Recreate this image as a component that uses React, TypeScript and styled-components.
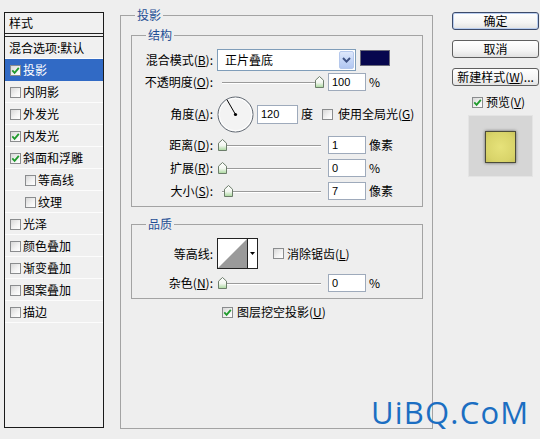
import React from 'react';
import styled, { createGlobalStyle } from 'styled-components';

const GlobalStyle = createGlobalStyle`
  html, body { margin: 0; padding: 0; background: #eeeeee; }
  body {
    font-family: "Noto Sans CJK SC", "Liberation Sans", sans-serif;
    font-size: 12px;
    color: #000;
  }
  #root { width: 540px; height: 439px; overflow: hidden; }
  u { text-decoration: underline; text-underline-offset: 1px; }
`;

const Page = styled.div`
  position: relative;
  width: 540px;
  height: 439px;
  display: flex;
  align-items: flex-start;
  background: #eeeeee;
`;

/* ---------- left style list ---------- */
const StylePanel = styled.div`
  margin: 12px 0 0 4px;
  width: 100px;
  height: 416px;
  box-sizing: border-box;
  border: 1px solid #1a1a1a;
  background: #f0f0f0;
  display: flex;
  flex-direction: column;
`;

const PanelHeader = styled.div`
  height: 24px;
  box-sizing: border-box;
  border-bottom: 4px double #222;
  padding-left: 4px;
  display: flex;
  align-items: center;
  line-height: 14px;
`;

const StyleRow = styled.div<{ $selected?: boolean; $indent?: number }>`
  height: 22px;
  box-sizing: border-box;
  display: flex;
  align-items: center;
  gap: 2px;
  padding-left: ${(p) => p.$indent ?? 5}px;
  line-height: 14px;
  white-space: nowrap;
  background: ${(p) => (p.$selected ? '#316ac5' : 'transparent')};
  color: ${(p) => (p.$selected ? '#fff' : '#000')};
  box-shadow: ${(p) => (p.$selected ? 'none' : 'inset 0 -1px 0 #fcfcfc')};
`;

/* ---------- checkbox ---------- */
const Box = styled.span`
  display: inline-flex;
  width: 11px;
  height: 11px;
  box-sizing: border-box;
  border: 1px solid #8a8c8e;
  background: linear-gradient(135deg, #d8d8d8 0%, #f4f4f4 60%, #ffffff 100%);
  flex: none;
  align-items: center;
  justify-content: center;
`;

const Check: React.FC<{ checked?: boolean }> = ({ checked }) => (
  <Box>
    {checked && (
      <svg width="9" height="9" viewBox="0 0 9 9">
        <path d="M1.3 4.4 L3.6 6.8 L7.8 1.8" fill="none" stroke="#1f9a2c" strokeWidth="1.8" />
      </svg>
    )}
  </Box>
);

/* ---------- middle groups ---------- */
const Group = styled.fieldset`
  margin: 8px 0 0 16px;
  width: 313px;
  height: 421px;
  box-sizing: border-box;
  padding: 0;
  border: 1px solid #a3a3a3;
  min-inline-size: auto;
`;

const Section = styled.fieldset<{ $mt: number }>`
  margin: ${(p) => p.$mt}px 9px 0 10px;
  padding: 7px 0 6px 0;
  border: 1px solid #a3a3a3;
  min-inline-size: auto;
`;

const Legend = styled.legend`
  margin-left: 14px;
  padding: 0 2px;
  line-height: 14px;
  font-size: 12px;
  color: #1f4f95;
`;

const FormRow = styled.div<{ $h: number; $mt?: number; $pl?: number }>`
  display: flex;
  align-items: center;
  height: ${(p) => p.$h}px;
  margin-top: ${(p) => p.$mt ?? 0}px;
  padding-left: ${(p) => p.$pl ?? 0}px;
  line-height: 14px;
  white-space: nowrap;
`;

const FieldLabel = styled.span`
  width: 81px;
  flex: none;
  text-align: right;
  margin-right: 4px;
  white-space: nowrap;
`;

const Select = styled.div`
  width: 139px;
  height: 22px;
  box-sizing: border-box;
  border: 1px solid #7f9db9;
  background: #fff;
  display: flex;
  align-items: center;
  padding-left: 7px;
`;

const SelectButton = styled.span`
  margin-left: auto;
  margin-right: 1px;
  width: 15px;
  height: 18px;
  box-sizing: border-box;
  border: 1px solid #b5c8ec;
  border-radius: 2px;
  background: linear-gradient(180deg, #dfe8fb 0%, #c1d3f6 60%, #b2c7f1 100%);
  display: flex;
  align-items: center;
  justify-content: center;
`;

const Swatch = styled.span`
  margin-left: 4px;
  width: 30px;
  height: 16px;
  box-sizing: border-box;
  align-self: flex-start;
  margin-top: 1px;
  background: #06064e;
  border: 1px solid #6a6a7a;
`;

const SliderWrap = styled.div`
  position: relative;
  width: 107px;
  height: 18px;
  flex: none;
`;

const Track = styled.div`
  position: absolute;
  left: 5px;
  right: 3px;
  top: 9px;
  height: 1px;
  background: #9a9a9a;
  border-bottom: 1px solid #ffffff;
`;

const Thumb = styled.svg`
  position: absolute;
  top: 3px;
`;

const Slider: React.FC<{ frac: number }> = ({ frac }) => (
  <SliderWrap>
    <Track />
    <Thumb width="9" height="12" viewBox="0 0 9 12" style={{ left: 5 + frac * 97 - 4.5 }}>
      <defs>
        <linearGradient id="tg" x1="0" y1="0" x2="0" y2="1">
          <stop offset="0" stopColor="#ffffff" />
          <stop offset="0.55" stopColor="#f2f6ef" />
          <stop offset="1" stopColor="#a8d89c" />
        </linearGradient>
      </defs>
      <path d="M0.5 4.2 L4.5 0.5 L8.5 4.2 V11.5 H0.5 Z" fill="url(#tg)" stroke="#6c7d6a" strokeWidth="1" />
    </Thumb>
  </SliderWrap>
);

const NumInput = styled.div<{ $w?: number; $ml?: number; $h?: number }>`
  margin-left: ${(p) => p.$ml ?? 4}px;
  width: ${(p) => p.$w ?? 38}px;
  height: ${(p) => p.$h ?? 18}px;
  box-sizing: border-box;
  border: 1px solid #9eaabb;
  background: #fff;
  padding-left: 3px;
  font-family: "Liberation Sans", Arial, sans-serif;
  font-size: 11px;
  display: flex;
  align-items: center;
  flex: none;
`;

const Unit = styled.span<{ $ml?: number }>`
  margin-left: ${(p) => p.$ml ?? 3}px;
`;

const CheckText = styled.span<{ $ml?: number }>`
  margin-left: ${(p) => p.$ml ?? 4}px;
  white-space: nowrap;
`;

const Spacer = styled.span<{ $w: number }>`
  width: ${(p) => p.$w}px;
  flex: none;
`;

const Contour = styled.div`
  width: 41px;
  height: 31px;
  box-sizing: border-box;
  border: 1px solid #222;
  display: flex;
  background: #fff;
  flex: none;
`;

const ContourArrow = styled.span`
  flex: 1;
  border-left: 1px solid #222;
  display: flex;
  align-items: center;
  justify-content: center;
`;

/* ---------- right column ---------- */
const SideColumn = styled.div`
  margin: 12px 0 0 19px;
  width: 87px;
  display: flex;
  flex-direction: column;
`;

const Button = styled.div<{ $default?: boolean }>`
  height: 18px;
  box-sizing: border-box;
  border: 1px solid ${(p) => (p.$default ? '#3c4a6a' : '#5f5f5f')};
  border-radius: 3px;
  background: linear-gradient(180deg, #ffffff 0%, #f4f4f4 60%, #e2e2e2 100%);
  box-shadow: ${(p) => (p.$default ? 'inset 0 0 0 1px #b9cdef' : 'none')};
  display: flex;
  align-items: center;
  justify-content: center;
  line-height: 14px;
  white-space: nowrap;
  & + & { margin-top: 10px; }
`;

const PreviewRow = styled.div`
  margin-top: 10px;
  height: 12px;
  padding-left: 20px;
  display: flex;
  align-items: center;
  line-height: 14px;
`;

const PreviewBox = styled.div`
  margin: 7px 0 0 16px;
  width: 65px;
  height: 62px;
  box-sizing: border-box;
  background: #d6d6d6;
  border: 1px solid #e4e4e4;
  display: flex;
  align-items: center;
  justify-content: center;
`;

const PreviewSquare = styled.div`
  width: 31px;
  height: 32px;
  box-sizing: border-box;
  background: radial-gradient(circle, #e6e27a 0%, #d9d46a 70%, #cbc55c 100%);
  border: 1px solid #4c4c3a;
  box-shadow: 0 0 3px rgba(0, 0, 0, 0.55);
  margin-top: 2px;
`;

const Watermark = styled.div`
  position: absolute;
  left: 371px;
  top: 397px;
  font-family: "Open Sans", "Noto Sans", sans-serif;
  font-size: 31px;
  line-height: 31px;
  color: #1b6ec2;
  letter-spacing: 1.2px;
  white-space: nowrap;
`;

const styleItems: { label: string; checked?: boolean; indent?: boolean; selected?: boolean }[] = [
  { label: '投影', checked: true, selected: true },
  { label: '内阴影' },
  { label: '外发光' },
  { label: '内发光', checked: true },
  { label: '斜面和浮雕', checked: true },
  { label: '等高线', indent: true },
  { label: '纹理', indent: true },
  { label: '光泽' },
  { label: '颜色叠加' },
  { label: '渐变叠加' },
  { label: '图案叠加' },
  { label: '描边' },
];

const Dial: React.FC = () => (
  <svg width="37" height="37" viewBox="0 0 37 37" style={{ flex: 'none' }}>
    <circle cx="18.5" cy="18.5" r="17.5" fill="#f3f3f3" stroke="#5e6670" strokeWidth="1" />
    <circle cx="18.5" cy="18.5" r="16.3" fill="none" stroke="#ffffff" strokeWidth="1" />
    <line x1="18.5" y1="18.5" x2="10" y2="3.8" stroke="#000" strokeWidth="1" />
    <circle cx="18.5" cy="18.5" r="1.6" fill="#000" />
  </svg>
);

export default function App() {
  return (
    <Page>
      <GlobalStyle />
      <StylePanel>
        <PanelHeader>样式</PanelHeader>
        <StyleRow $indent={4}>混合选项:默认</StyleRow>
        {styleItems.map((it) => (
          <StyleRow key={it.label} $selected={it.selected} $indent={it.indent ? 20 : 5}>
            <Check checked={it.checked} />
            <span>{it.label}</span>
          </StyleRow>
        ))}
      </StylePanel>

      <Group>
        <Legend>投影</Legend>
        <Section $mt={6}>
          <Legend>结构</Legend>
          <FormRow $h={22}>
            <FieldLabel>混合模式(<u>B</u>):</FieldLabel>
            <Select>
              正片叠底
              <SelectButton>
                <svg width="9" height="6" viewBox="0 0 9 6">
                  <path d="M1 1 L4.5 4.6 L8 1" fill="none" stroke="#3f5283" strokeWidth="2" />
                </svg>
              </SelectButton>
            </Select>
            <Swatch />
          </FormRow>
          <FormRow $h={18} $mt={2}>
            <FieldLabel>不透明度(<u>O</u>):</FieldLabel>
            <Slider frac={1} />
            <NumInput>100</NumInput>
            <Unit>%</Unit>
          </FormRow>
          <FormRow $h={36} $mt={5}>
            <FieldLabel>角度(<u>A</u>):</FieldLabel>
            <Dial />
            <NumInput $ml={3} $w={41} $h={19}>120</NumInput>
            <Unit>度</Unit>
            <Spacer $w={9} />
            <Check />
            <CheckText $ml={5}>使用全局光(<u>G</u>)</CheckText>
          </FormRow>
          <FormRow $h={18} $mt={4}>
            <FieldLabel>距离(<u>D</u>):</FieldLabel>
            <Slider frac={0} />
            <NumInput>1</NumInput>
            <Unit>像素</Unit>
          </FormRow>
          <FormRow $h={18} $mt={5}>
            <FieldLabel>扩展(<u>R</u>):</FieldLabel>
            <Slider frac={0} />
            <NumInput>0</NumInput>
            <Unit>%</Unit>
          </FormRow>
          <FormRow $h={18} $mt={5}>
            <FieldLabel>大小(<u>S</u>):</FieldLabel>
            <Slider frac={0.065} />
            <NumInput>7</NumInput>
            <Unit>像素</Unit>
          </FormRow>
        </Section>

        <Section $mt={10}>
          <Legend>品质</Legend>
          <FormRow $h={31}>
            <FieldLabel>等高线:</FieldLabel>
            <Contour>
              <svg width="29" height="29" viewBox="0 0 29 29" style={{ flex: 'none' }}>
                <polygon points="0,29 29,0 29,29" fill="#9a9a9a" />
              </svg>
              <ContourArrow>
                <svg width="5" height="3" viewBox="0 0 5 3">
                  <polygon points="0,0 5,0 2.5,3" fill="#000" />
                </svg>
              </ContourArrow>
            </Contour>
            <Spacer $w={15} />
            <Check />
            <CheckText $ml={3}>消除锯齿(<u>L</u>)</CheckText>
          </FormRow>
          <FormRow $h={18} $mt={5}>
            <FieldLabel>杂色(<u>N</u>):</FieldLabel>
            <Slider frac={0} />
            <NumInput>0</NumInput>
            <Unit>%</Unit>
          </FormRow>
        </Section>

        <FormRow $h={14} $mt={6} $pl={101}>
          <Check checked />
          <CheckText>图层挖空投影(<u>U</u>)</CheckText>
        </FormRow>
      </Group>

      <SideColumn>
        <Button $default>确定</Button>
        <Button>取消</Button>
        <Button>新建样式(<u>W</u>)...</Button>
        <PreviewRow>
          <Check checked />
          <CheckText $ml={3}>预览(<u>V</u>)</CheckText>
        </PreviewRow>
        <PreviewBox>
          <PreviewSquare />
        </PreviewBox>
      </SideColumn>

      <Watermark>UiBQ.CoM</Watermark>
    </Page>
  );
}
